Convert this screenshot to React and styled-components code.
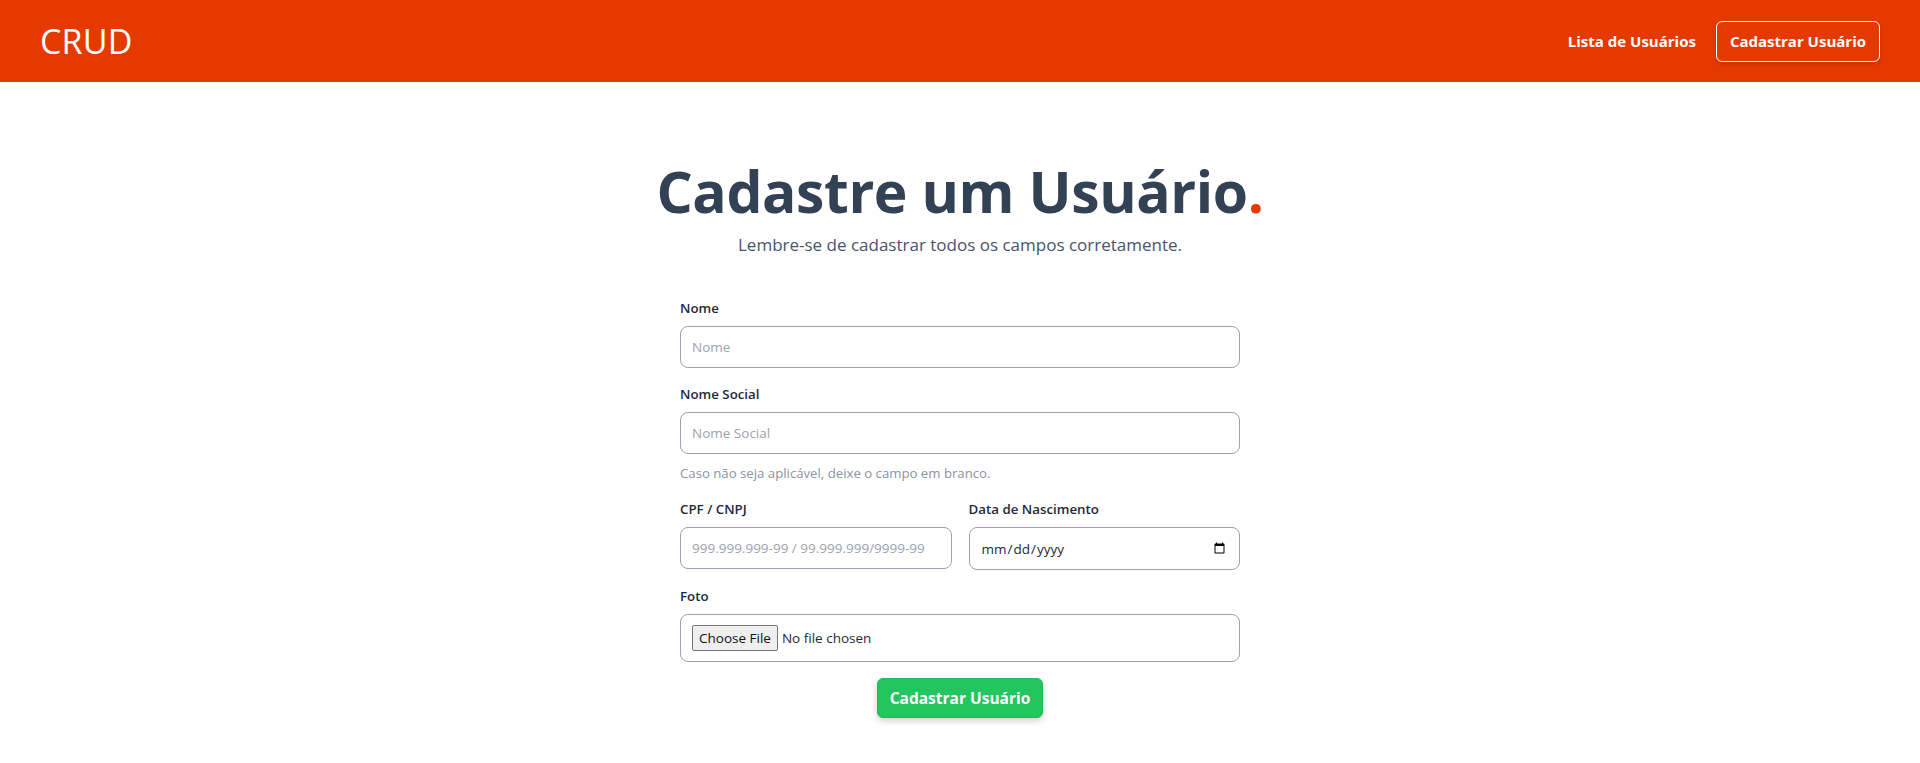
import React from 'react';
import styled, { createGlobalStyle } from 'styled-components';

const GlobalStyle = createGlobalStyle`
  body {
    margin: 0;
    background: #ffffff;
    font-family: 'Open Sans', 'Noto Sans', sans-serif;
  }
  * {
    box-sizing: border-box;
  }
`;

const ORANGE = '#e63900';

export default function App() {
  return (
    <>
      <GlobalStyle />
      <Header>
        <Logo>CRUD</Logo>
        <Nav>
          <NavLink href="#">Lista de Usuários</NavLink>
          <NavButton href="#">Cadastrar Usuário</NavButton>
        </Nav>
      </Header>

      <Main>
        <Title>
          Cadastre um Usuário<Dot>.</Dot>
        </Title>
        <Subtitle>Lembre-se de cadastrar todos os campos corretamente.</Subtitle>

        <Form onSubmit={(e) => e.preventDefault()}>
          <Field>
            <Label htmlFor="nome">Nome</Label>
            <Input id="nome" type="text" placeholder="Nome" />
          </Field>

          <Field>
            <Label htmlFor="nomeSocial">Nome Social</Label>
            <Input id="nomeSocial" type="text" placeholder="Nome Social" />
            <Helper>Caso não seja aplicável, deixe o campo em branco.</Helper>
          </Field>

          <Row>
            <Field>
              <Label htmlFor="documento">CPF / CNPJ</Label>
              <Input id="documento" type="text" placeholder="999.999.999-99 / 99.999.999/9999-99" />
            </Field>
            <Field>
              <Label htmlFor="nascimento">Data de Nascimento</Label>
              <Input id="nascimento" type="date" $tall />
            </Field>
          </Row>

          <Field>
            <Label htmlFor="foto">Foto</Label>
            <FileBox>
              <FileInput id="foto" type="file" />
            </FileBox>
          </Field>

          <SubmitButton type="submit">Cadastrar Usuário</SubmitButton>
        </Form>
      </Main>
    </>
  );
}

const Header = styled.header`
  display: flex;
  align-items: center;
  justify-content: space-between;
  height: 82px;
  padding: 0 40px;
  background-color: ${ORANGE};
`;

const Logo = styled.div`
  color: #ffffff;
  font-size: 34px;
  font-weight: 400;
  letter-spacing: 0.2px;
`;

const Nav = styled.nav`
  display: flex;
  align-items: center;
  gap: 20px;
`;

const NavLink = styled.a`
  color: #ffffff;
  font-size: 15px;
  font-weight: 700;
  text-decoration: none;
`;

const NavButton = styled.a`
  display: inline-flex;
  align-items: center;
  height: 41px;
  padding: 0 13px;
  border: 1px solid #ffffff;
  border-radius: 6px;
  color: #ffffff;
  font-size: 15px;
  font-weight: 700;
  text-decoration: none;
  box-shadow: 0 2px 4px rgba(0, 0, 0, 0.15);
`;

const Main = styled.main`
  display: flex;
  flex-direction: column;
  align-items: center;
  padding: 81px 0 40px;
`;

const Title = styled.h1`
  margin: 0;
  color: #334155;
  font-size: 57px;
  font-weight: 700;
  line-height: 1;
  letter-spacing: -0.4px;
`;

const Dot = styled.span`
  color: ${ORANGE};
`;

const Subtitle = styled.p`
  margin: 12px 0 0;
  color: #475569;
  font-size: 17px;
  line-height: 26px;
`;

const Form = styled.form`
  display: flex;
  flex-direction: column;
  gap: 16px;
  width: 560px;
  margin-top: 40px;
`;

const Field = styled.div`
  display: flex;
  flex-direction: column;
  min-width: 0;
`;

const Row = styled.div`
  display: grid;
  grid-template-columns: 1fr 1fr;
  gap: 17px;
`;

const Label = styled.label`
  margin-bottom: 8px;
  color: #1f2937;
  font-size: 13.3px;
  font-weight: 600;
  line-height: 20px;
`;

const Input = styled.input`
  height: ${(p) => (p.$tall ? '43px' : '42px')};
  padding: 0 11px;
  border: 1px solid #9ca3af;
  border-radius: 8px;
  color: #1f2937;
  font-family: 'Open Sans', sans-serif;
  font-size: 13.5px;
  outline: none;

  &::placeholder {
    color: #9ca3af;
  }
`;

const Helper = styled.span`
  margin-top: 9px;
  color: #8a94a6;
  font-size: 13.2px;
  line-height: 20px;
`;

const FileBox = styled.div`
  display: flex;
  align-items: center;
  height: 48px;
  padding: 0 11px;
  border: 1px solid #9ca3af;
  border-radius: 8px;
`;

const FileInput = styled.input`
  font-family: 'Open Sans', sans-serif;
  font-size: 13.5px;
  color: #1f2937;

  &::file-selector-button {
    margin-right: 4px;
    padding: 3px 6px;
    border: 1px solid #767676;
    border-radius: 2px;
    background: #efefef;
    color: #111111;
    font-family: 'Open Sans', sans-serif;
    font-size: 13.5px;
  }
`;

const SubmitButton = styled.button`
  align-self: center;
  height: 40px;
  padding: 0 12px;
  border: 1px solid #1fb955;
  border-radius: 6px;
  background-color: #22c55e;
  color: #ffffff;
  font-family: 'Open Sans', sans-serif;
  font-size: 15.5px;
  font-weight: 700;
  box-shadow: 0 3px 6px rgba(0, 0, 0, 0.18);
  cursor: pointer;
`;
